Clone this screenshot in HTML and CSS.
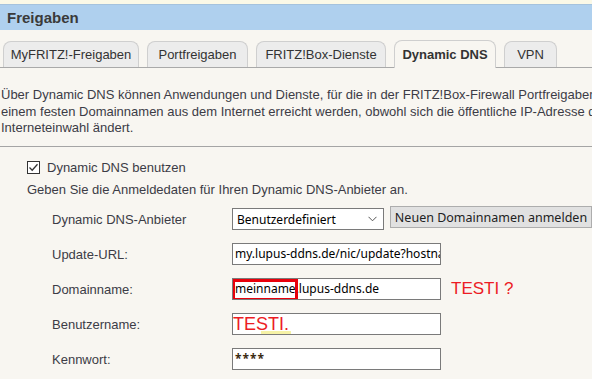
FILE: index.html
```html
<!DOCTYPE html>
<html lang="de">
<head>
  <meta charset="UTF-8">
  <title>Freigaben - Dynamic DNS</title>
  <link rel="stylesheet" href="styles.css">
</head>
<body>
  <div class="page">
    <div class="topline"></div>
    <div class="titlebar">
      <h1>Freigaben</h1>
    </div>

    <!-- Tabs -->
    <div class="tabs">
      <div class="tab t1">MyFRITZ!-Freigaben</div>
      <div class="tab t2">Portfreigaben</div>
      <div class="tab t3">FRITZ!Box-Dienste</div>
      <div class="tab active">Dynamic DNS</div>
      <div class="tab t5">VPN</div>
    </div>

    <p class="intro">
      Über Dynamic DNS können Anwendungen und Dienste, für die in der FRITZ!Box-Firewall Portfreigaben eingerichtet wurden,<br>
      einem festen Domainnamen aus dem Internet erreicht werden, obwohl sich die öffentliche IP-Adresse der FRITZ!Box mit jeder<br>
      Interneteinwahl ändert.
    </p>
    <hr class="sep">

    <div class="section">
      <label class="check">
        <span class="box">
          <svg width="11" height="11" viewBox="0 0 11 11"><path d="M1.5 5.5 L4.2 8.2 L9.5 2.2" fill="none" stroke="#333" stroke-width="1.3"/></svg>
        </span>
        Dynamic DNS benutzen
      </label>
      <p class="hint">Geben Sie die Anmeldedaten für Ihren Dynamic DNS-Anbieter an.</p>

      <div class="rows">
        <div class="row">
          <span class="label">Dynamic DNS-Anbieter</span>
          <div class="select">
            <span>Benutzerdefiniert</span>
            <svg width="9" height="6" viewBox="0 0 9 6"><path d="M0.5 0.8 L4.5 4.8 L8.5 0.8" fill="none" stroke="#555" stroke-width="1"/></svg>
          </div>
          <button class="btn">Neuen Domainnamen anmelden</button>
        </div>

        <div class="row">
          <span class="label">Update-URL:</span>
          <div class="field">my.lupus-ddns.de/nic/update?hostname=&lt;domain&gt;</div>
        </div>

        <div class="row">
          <span class="label">Domainname:</span>
          <div class="field">
            <span class="mark">meinname</span>.lupus-ddns.de
          </div>
          <span class="note">TESTI ?</span>
        </div>

        <div class="row">
          <span class="label">Benutzername:</span>
          <div class="field">
            <span class="scribble">TESTI.</span>
            <span class="smudge"></span>
          </div>
        </div>

        <div class="row">
          <span class="label">Kennwort:</span>
          <div class="field stars">****</div>
        </div>
      </div>
    </div>
  </div>
</body>
</html>
```

FILE: styles.css
```css
body {
  margin: 0;
  background-color: #f8f6f1;
  overflow: hidden;
  font-family: "Liberation Sans", Arial, sans-serif;
  font-size: 13px;
  color: #3c3c46;
}
.page {
  width: 760px;
}
.topline {
  height: 4px;
  background-color: #fbf9e7;
}
.titlebar {
  height: 25px;
  background-color: #afd0ee;
  border-top: 1px solid #a6c3dd;
}
.titlebar h1 {
  margin: 0;
  padding-left: 7px;
  font-size: 15px;
  line-height: 25px;
  color: #3a3a3a;
}
.tabs {
  display: flex;
  align-items: flex-end;
  gap: 8px;
  margin-top: 10px;
  padding-left: 3px;
  height: 27px;
  border-bottom: 1px solid #a9a9a9;
}
.tab {
  box-sizing: border-box;
  height: 26px;
  line-height: 25px;
  text-align: center;
  white-space: nowrap;
  background-color: #ececec;
  border: 1px solid #cfcfcf;
  border-bottom: none;
  border-radius: 8px 8px 0 0;
  color: #333;
}
.t1 { width: 136px; }
.t2 { width: 101px; }
.t3 { width: 130px; }
.t5 { width: 53px; }
.tab.active {
  width: 102px;
  height: 28px;
  line-height: 27px;
  margin-bottom: -1px;
  background-color: #f8f6f1;
  font-weight: bold;
}
.intro {
  margin: 0;
  padding: 19px 0 0 1px;
  line-height: 16.5px;
  white-space: nowrap;
}
.sep {
  margin: 9px 0 0 0;
  border: none;
  border-top: 1px solid #a5a5a5;
}
.section {
  padding-left: 27px;
}
.check {
  display: flex;
  align-items: center;
  gap: 7px;
  margin-top: 14px;
  height: 13px;
}
.box {
  display: flex;
  align-items: center;
  justify-content: center;
  width: 11px;
  height: 11px;
  border: 1px solid #333;
  background-color: #fff;
}
.hint {
  margin: 8px 0 0 0;
}
.rows {
  margin-top: 5px;
}
.row {
  display: flex;
  align-items: center;
  height: 35px;
  padding-left: 25px;
}
.label {
  width: 180px;
}
.select, .field, .btn {
  font-family: "Noto Sans", sans-serif;
  font-size: 12px;
  color: #000;
}
.select {
  display: flex;
  align-items: center;
  justify-content: space-between;
  width: 140px;
  height: 20px;
  padding: 0 6px 0 4px;
  border: 1px solid #7a7a7a;
  background-color: #fff;
}
.btn {
  margin-left: 6px;
  margin-top: -4px;
  width: 202px;
  height: 22px;
  padding: 0;
  border: 1px solid #adadad;
  background-color: #e1e1e1;
  color: #222;
  font-size: 12.5px;
}
.field {
  position: relative;
  width: 203px;
  height: 20px;
  line-height: 20px;
  padding: 0 2px;
  border: 1px solid #7a7a7a;
  background-color: #fff;
  overflow: hidden;
  white-space: nowrap;
}
.mark {
  position: relative;
}
.mark::after {
  content: "";
  position: absolute;
  left: -3px;
  top: -1px;
  width: 60px;
  height: 16px;
  border: 3px solid #e8000b;
}
.note {
  margin-left: 10px;
  font-size: 17px;
  color: #ec1c24;
}
.scribble {
  font-family: "Liberation Sans", Arial, sans-serif;
  font-size: 18px;
  color: #ec1c24;
  margin-left: -2px;
}
.smudge {
  position: absolute;
  left: 28px;
  bottom: 0;
  width: 30px;
  height: 3px;
  background-color: #f6f2a6;
}
.stars {
  font-weight: bold;
  color: #3a2a10;
  letter-spacing: 1px;
}
```
